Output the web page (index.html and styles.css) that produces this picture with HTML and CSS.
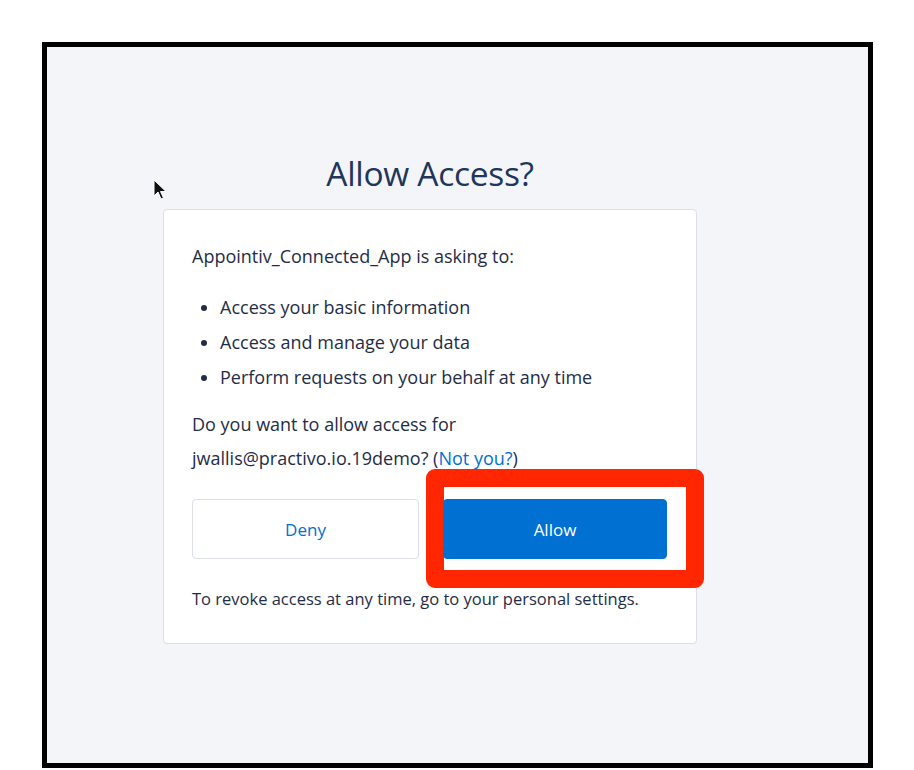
FILE: index.html
```html
<!DOCTYPE html>
<html lang="en">
<head>
  <meta charset="UTF-8" />
  <title>Allow Access?</title>
  <link rel="stylesheet" href="styles.css">
</head>
<body>

  <!-- screenshot frame -->
  <div class="frame">

    <!-- mouse pointer -->
    <svg class="cursor" width="14" height="22" viewBox="0 0 14 22">
      <path d="M1 1 L1 17 L5 13 L8 20 L10.5 19 L7.5 12.5 L13 12.5 Z" fill="#111" stroke="#fff" stroke-width="1"/>
    </svg>

    <div class="dialog">
      <h1 class="title">Allow Access?</h1>

      <div class="card">
        <p class="lead">Appointiv_Connected_App is asking to:</p>
        <ul class="scopes">
          <li>Access your basic information</li>
          <li>Access and manage your data</li>
          <li>Perform requests on your behalf at any time</li>
        </ul>
        <p class="ask">Do you want to allow access for<br>jwallis@practivo.io.19demo? (<a href="#">Not you?</a>)</p>

        <div class="actions">
          <button class="btn deny">Deny</button>
          <div class="allow-wrap">
            <div class="highlight"></div>
            <button class="btn allow">Allow</button>
          </div>
        </div>

        <p class="revoke">To revoke access at any time, go to your personal settings.</p>
      </div>
    </div>

  </div>

</body>
</html>
```

FILE: styles.css
```css
body {
  margin: 0;
  background: #ffffff;
  font-family: "Open Sans", Arial, sans-serif;
  color: #1f2d48;
}

.frame {
  position: relative;
  margin: 42px 0 0 42px;
  width: 821px;
  height: 716px;
  border: 5px solid #000;
  background: #f3f5f9;
}

.cursor {
  position: absolute;
  left: 106px;
  top: 132px;
}

.dialog {
  margin-left: 116px;
  width: 534px;
  display: flex;
  flex-direction: column;
  align-items: center;
}

.title {
  margin: 105px 0 0;
  font-size: 33.5px;
  font-weight: 400;
  color: #22365a;
  line-height: 42px;
  letter-spacing: -0.3px;
}

.card {
  margin-top: 15px;
  width: 476px;
  padding: 36px 28px 34px;
  background: #fff;
  border: 1px solid #dcdfe5;
  border-radius: 4px;
  font-size: 18px;
}

.lead {
  margin: 0;
  line-height: 20px;
}

.scopes {
  margin: 24px 0 0;
  padding: 0 0 0 28px;
  line-height: 35px;
}

.ask {
  margin: 12px 0 0;
  line-height: 34px;
}

.ask a {
  color: #0070d2;
  text-decoration: none;
}

.actions {
  margin-top: 24px;
  display: grid;
  grid-template-columns: 227px 224px;
  gap: 24px;
}

.allow-wrap {
  position: relative;
}

.btn {
  width: 100%;
  height: 60px;
  border-radius: 4px;
  font-family: "Open Sans", Arial, sans-serif;
  font-size: 17px;
  cursor: pointer;
}

.deny {
  background: #fff;
  border: 1px solid #dcdfe5;
  color: #0070d2;
}

.allow {
  position: relative;
  z-index: 1;
  background: #0070d2;
  border: 1px solid #0070d2;
  color: #fff;
}

.highlight {
  position: absolute;
  top: -30px;
  left: -17px;
  right: -37px;
  bottom: -29px;
  border: 18px solid #ff2600;
  border-radius: 9px;
  box-sizing: border-box;
  background: #fff;
}

.revoke {
  margin: 30px 0 0;
  font-size: 16.5px;
  line-height: 20px;
}
```
